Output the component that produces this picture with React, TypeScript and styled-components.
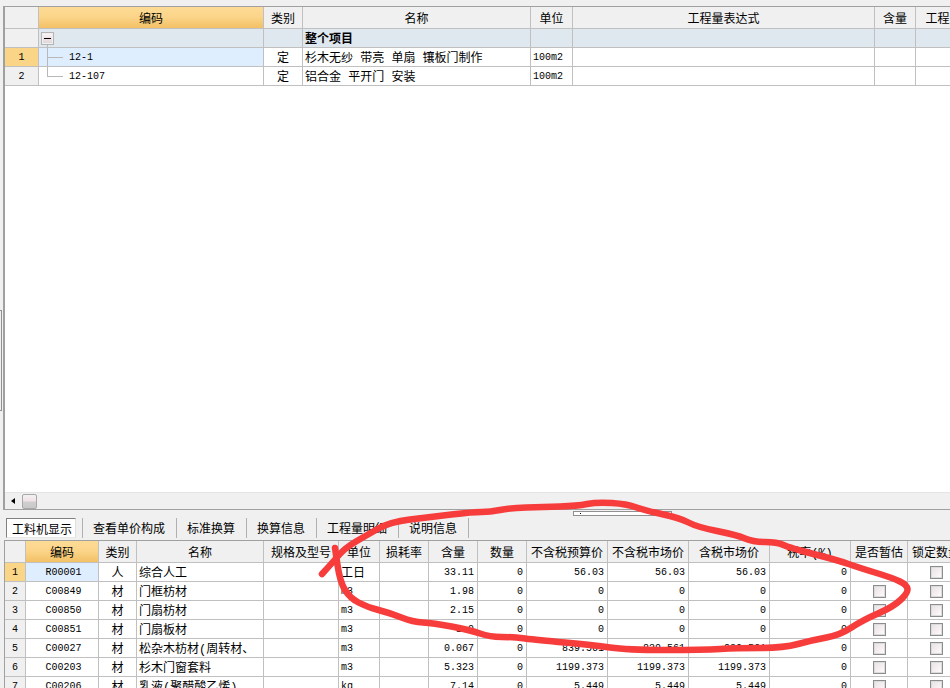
import React from "react";
import styled, { createGlobalStyle } from "styled-components";

const GlobalStyle = createGlobalStyle`
html, body {
  margin: 0;
  padding: 0;
  background: #f0f0f0;
  overflow: hidden;
}
`;

const FONT = `"Liberation Mono", "Noto Sans CJK SC", monospace`;

const Page = styled.div`
  position: relative;
  width: 950px;
  height: 688px;
  overflow: hidden;
  background: #f0f0f0;
  font-family: ${FONT};
  font-size: 12px;
  color: #000;
  padding-top: 6px;
  box-sizing: border-box;
`;

const TopPanel = styled.section`
  display: flex;
  flex-direction: column;
  height: 504px;
  margin-left: 3px;
  background: #fff;
  border: solid #a0a0a0;
  border-width: 1px 0 1px 2px;
  box-sizing: border-box;
`;

const Grid = styled.div<{ $cols: number[] }>`
  display: grid;
  grid-template-columns: ${(p) => p.$cols.map((c) => `${c}px`).join(" ")};
  grid-template-rows: 22px;
  grid-auto-rows: 19px;
  width: max-content;
`;

const Spacer = styled.div`
  flex: 1;
`;

const Cell = styled.div<{ $align?: "left" | "center" | "right"; $bg?: string; $bold?: boolean; $cjk?: boolean }>`
  position: relative;
  box-sizing: border-box;
  height: 100%;
  display: flex;
  align-items: center;
  justify-content: ${(p) => (p.$align === "right" ? "flex-end" : p.$align === "center" ? "center" : "flex-start")};
  padding: ${(p) => (p.$align === "right" ? "0 3px 0 0" : p.$align === "center" ? "0" : "0 0 0 2px")};
  border-right: 1px solid #c0c0c0;
  border-bottom: 1px solid #c0c0c0;
  background: ${(p) => p.$bg ?? "#fff"};
  font-weight: ${(p) => (p.$bold ? "bold" : "normal")};
  font-size: ${(p) => (p.$cjk ? "12px" : "10px")};
  white-space: pre;
  overflow: hidden;
`;

const HeadCell = styled(Cell)<{ $active?: boolean }>`
  font-size: 12px;
  background: ${(p) => (p.$active ? "linear-gradient(#fddb96, #fbd488 50%, #f3c065)" : "#f0f0f0")};
`;

const CodeCell = styled(Cell)`
  padding-left: 3px;
`;

const TreeCell = styled(Cell)<{ $last?: boolean }>`
  padding-left: 30px;
  &::before {
    content: "";
    position: absolute;
    left: 8px;
    top: 0;
    height: ${(p) => (p.$last ? "9px" : "100%")};
    border-left: 1px solid #b8b8b8;
  }
  &::after {
    content: "";
    position: absolute;
    left: 8px;
    top: 9px;
    width: 16px;
    border-top: 1px solid #b8b8b8;
  }
`;

const Collapse = styled.span`
  position: relative;
  box-sizing: border-box;
  width: 13px;
  height: 13px;
  border: 1px solid #b4b4b4;
  background: linear-gradient(#f8f8f8, #f3dfe6 50%, #d8d8d8);
  box-shadow: inset 0 0 0 1px #efefef;
  &::after {
    content: "";
    position: absolute;
    left: 2px;
    top: 5px;
    width: 7px;
    height: 1px;
    background: #000;
  }
`;

const CollapseStem = styled.span`
  position: absolute;
  left: 8px;
  top: 16px;
  height: 4px;
  border-left: 1px solid #b8b8b8;
`;

const ScrollTrack = styled.div`
  display: flex;
  align-items: center;
  height: 17px;
  background: #f0f0f0;
  border-top: 1px solid #e4e4e4;
  box-sizing: border-box;
  flex-shrink: 0;
`;

const ArrowLeft = styled.span`
  width: 0;
  height: 0;
  margin: 0 7px 0 6px;
  border: solid transparent;
  border-width: 3px 4px 3px 0;
  border-right-color: #000;
`;

const Thumb = styled.span`
  width: 15px;
  height: 15px;
  box-sizing: border-box;
  border: 1px solid #a8a8a8;
  border-radius: 2px;
  background: linear-gradient(#f2f2f2, #f3e2e6 45%, #cfcfcf 55%, #c8c8c8);
`;

const Tabs = styled.nav`
  display: flex;
  align-items: center;
  height: 20px;
  margin: 8px 0 2px 6px;
`;

const Tab = styled.div<{ $active?: boolean }>`
  box-sizing: border-box;
  height: 20px;
  display: flex;
  align-items: center;
  padding: ${(p) => (p.$active ? "1px 0 0 5px" : "0 11px 0 10px")};
  width: ${(p) => (p.$active ? "70px" : "auto")};
  margin-right: ${(p) => (p.$active ? "6px" : "0")};
  background: ${(p) => (p.$active ? "#fff" : "transparent")};
  border: ${(p) => (p.$active ? "1px solid" : "0 solid")};
  border-color: #808080 #e8e8e8 #e8e8e8 #808080;
  border-right: ${(p) => (p.$active ? "1px solid #e0e0e0" : "1px solid #b0b0b0")};
  white-space: nowrap;
`;

const FirstSep = styled.span`
  width: 1px;
  height: 20px;
  background: #b0b0b0;
`;

const BottomPanel = styled.section`
  margin-left: 4px;
  border-top: 1px solid #a0a0a0;
  border-left: 1px solid #a0a0a0;
  width: max-content;
  background: #fff;
`;

const Check = styled.span`
  box-sizing: border-box;
  width: 13px;
  height: 13px;
  border: 1px solid #8c8c8c;
  background: linear-gradient(135deg, #e4e4e4, #f6eef2 55%, #ffffff);
  box-shadow: inset 0 0 0 1px #dcdcdc;
`;

const SideGrip = styled.div`
  position: absolute;
  left: -1px;
  top: 310px;
  width: 2px;
  height: 99px;
  border: 1px solid #909090;
  border-left: 0;
`;

const SplitGrip = styled.div`
  position: absolute;
  left: 573px;
  top: 511px;
  width: 99px;
  height: 5px;
  box-sizing: border-box;
  background: #fff;
  border: 1px solid #909090;
  &::after {
    content: "";
    position: absolute;
    left: 6px;
    top: 1px;
    width: 1px;
    height: 1px;
    background: #000;
  }
`;

const Scribble = styled.svg`
  position: absolute;
  left: 0;
  top: 0;
  pointer-events: none;
`;

const topCols = [34, 225, 39, 228, 42, 302, 41, 56];
const topHeads = ["", "编码", "类别", "名称", "单位", "工程量表达式", "含量", "工程量"];

const botCols = [21, 73, 38, 127, 75, 41, 49, 49, 49, 81, 81, 81, 81, 57, 57];
const botHeads = ["", "编码", "类别", "名称", "规格及型号", "单位", "损耗率", "含量", "数量", "不含税预算价", "不含税市场价", "含税市场价", "税率(%)", "是否暂估", "锁定数量"];

const topRows = [
  { no: "1", code: "12-1", type: "定", name: "杉木无纱 带亮 单扇 镶板门制作", unit: "100m2" },
  { no: "2", code: "12-107", type: "定", name: "铝合金 平开门 安装", unit: "100m2" },
];

type Material = [string, string, string, string, string, string, string, string];

const materials: Material[] = [
  ["R00001", "人", "综合人工", "工日", "33.11", "56.03", "56.03", "56.03"],
  ["C00849", "材", "门框枋材", "m3", "1.98", "0", "0", "0"],
  ["C00850", "材", "门扇枋材", "m3", "2.15", "0", "0", "0"],
  ["C00851", "材", "门扇板材", "m3", "1.9", "0", "0", "0"],
  ["C00027", "材", "松杂木枋材(周转材、", "m3", "0.067", "839.561", "839.561", "839.561"],
  ["C00203", "材", "杉木门窗套料", "m3", "5.323", "1199.373", "1199.373", "1199.373"],
  ["C00206", "材", "乳液(聚醋酸乙烯)", "kg", "7.14", "5.449", "5.449", "5.449"],
];

const tabs = ["查看单价构成", "标准换算", "换算信息", "工程量明细", "说明信息"];

const scribblePoints = [
  [322, 574], [333, 562], [345, 548], [367, 535], [390, 522], [430, 517], [473, 512], [490, 512],
  [510, 508], [543, 507], [577, 506], [597, 502], [627, 504], [643, 510], [680, 518], [697, 527],
  [737, 535], [753, 542], [777, 542], [790, 548], [837, 560], [860, 568], [893, 578], [907, 585],
  [908, 593], [893, 607], [863, 620], [840, 635], [813, 640], [783, 648], [737, 648], [703, 650],
  [627, 650], [593, 645], [537, 640], [513, 637], [490, 637], [470, 630], [433, 623], [413, 622],
  [390, 613], [367, 607], [350, 598], [340, 582], [335, 548],
];

// round the hand-drawn line off through the midpoints
function smoothPath(pts: number[][]) {
  let d = `M${pts[0][0]} ${pts[0][1]}`;
  for (let i = 1; i < pts.length - 1; i++) {
    const mx = (pts[i][0] + pts[i + 1][0]) / 2;
    const my = (pts[i][1] + pts[i + 1][1]) / 2;
    d += ` Q${pts[i][0]} ${pts[i][1]} ${mx} ${my}`;
  }
  const last = pts[pts.length - 1];
  return `${d} L${last[0]} ${last[1]}`;
}

function App() {
  return (
    <Page>
      <GlobalStyle />
      <TopPanel>
        <Grid $cols={topCols}>
          {topHeads.map((h, i) => (
            <HeadCell key={i} $align="center" $cjk $active={i === 1}>{h}</HeadCell>
          ))}
          <Cell $bg="#f0f0f0" />
          <Cell $bg="#dfe7ef">
            <Collapse />
            <CollapseStem />
          </Cell>
          <Cell $bg="#dfe7ef" />
          <Cell $bg="#dfe7ef" $cjk $bold>整个项目</Cell>
          <Cell $bg="#dfe7ef" />
          <Cell $bg="#dfe7ef" />
          <Cell $bg="#dfe7ef" />
          <Cell $bg="#dfe7ef" />
          {topRows.map((r, i) => (
            <React.Fragment key={r.no}>
              <Cell $align="center" $bg={i === 0 ? "#fbd587" : "#f0f0f0"}>{r.no}</Cell>
              <TreeCell $bg={i === 0 ? "#dfeefe" : "#fff"} $last={i === 1}>{r.code}</TreeCell>
              <Cell $align="center" $cjk>{r.type}</Cell>
              <Cell $cjk>{r.name}</Cell>
              <Cell>{r.unit}</Cell>
              <Cell />
              <Cell />
              <Cell />
            </React.Fragment>
          ))}
        </Grid>
        <Spacer />
        <ScrollTrack>
          <ArrowLeft />
          <Thumb />
        </ScrollTrack>
      </TopPanel>
      <Tabs>
        <Tab $active>工料机显示</Tab>
        <FirstSep />
        {tabs.map((t) => (
          <Tab key={t}>{t}</Tab>
        ))}
      </Tabs>
      <BottomPanel>
        <Grid $cols={botCols}>
          {botHeads.map((h, i) => (
            <HeadCell key={i} $align="center" $cjk $active={i === 1}>{h}</HeadCell>
          ))}
          {materials.map((m, i) => (
            <React.Fragment key={m[0]}>
              <Cell $align="center" $bg={i === 0 ? "#fbd587" : "#f0f0f0"}>{i + 1}</Cell>
              <CodeCell $align="center" $bg={i === 0 ? "#dfeefe" : "#fff"}>{m[0]}</CodeCell>
              <Cell $align="center" $cjk>{m[1]}</Cell>
              <Cell $cjk>{m[2]}</Cell>
              <Cell />
              <Cell $cjk={i === 0}>{m[3]}</Cell>
              <Cell />
              <Cell $align="right">{m[4]}</Cell>
              <Cell $align="right">0</Cell>
              <Cell $align="right">{m[5]}</Cell>
              <Cell $align="right">{m[6]}</Cell>
              <Cell $align="right">{m[7]}</Cell>
              <Cell $align="right">0</Cell>
              <Cell $align="center">{i > 0 && <Check />}</Cell>
              <Cell $align="center"><Check /></Cell>
            </React.Fragment>
          ))}
        </Grid>
      </BottomPanel>
      <SideGrip />
      <SplitGrip />
      <Scribble width="950" height="688" viewBox="0 0 950 688">
        <path d={smoothPath(scribblePoints)} fill="none" stroke="#f73c3c" strokeWidth="6.5" strokeLinecap="round" strokeLinejoin="round" />
      </Scribble>
    </Page>
  );
}

export default App;
